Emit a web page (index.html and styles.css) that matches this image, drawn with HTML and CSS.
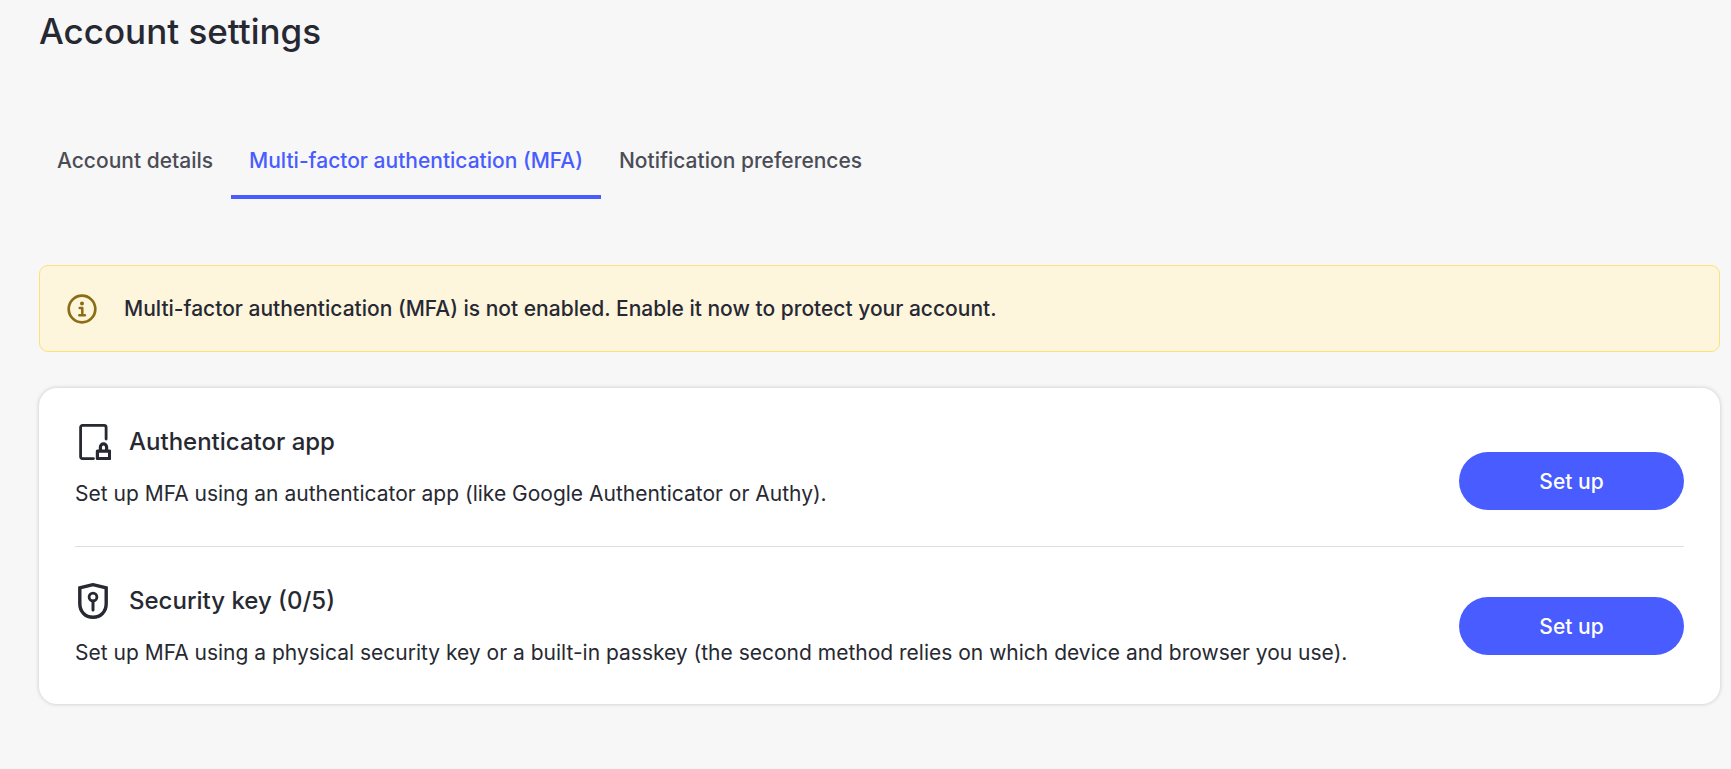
FILE: index.html
```
<!DOCTYPE html>
<html lang="en">
<head>
    <meta charset="UTF-8">
    <meta name="viewport" content="width=device-width, initial-scale=1.0">
    <title>Account settings</title>
    <link rel="stylesheet" href="styles.css">
</head>
<body>
    <main class="page">
        <h1>Account settings</h1>

        <nav class="tabs">
            <a href="#details">Account details</a>
            <a href="#mfa" class="active" aria-current="page">Multi-factor authentication (MFA)</a>
            <a href="#notifications">Notification preferences</a>
        </nav>

        <div class="alert" role="status">
            <svg class="alert-icon" viewBox="0 0 30 30" fill="none" stroke="currentColor" aria-hidden="true">
                <circle cx="15" cy="15" r="13.3" stroke-width="2.7"/>
                <circle cx="15" cy="9.6" r="2" fill="currentColor" stroke="none"/>
                <path d="M12.7 14h2.6v7M12.3 21.2h5.6" stroke-width="2.5" stroke-linecap="round" stroke-linejoin="round"/>
            </svg>
            <p>Multi-factor authentication (MFA) is not enabled. Enable it now to protect your account.</p>
        </div>

        <div class="card">
            <section class="method method-app">
                <div class="method-info">
                    <h2>
                        <svg class="method-icon" viewBox="0 0 36 36" fill="none" stroke="currentColor" aria-hidden="true">
                            <path d="M18.5 34.6H7.6a2 2 0 0 1-2-2V3.4a2 2 0 0 1 2-2h21.5a2 2 0 0 1 2 2V15" stroke-width="2.8" stroke-linecap="round" stroke-linejoin="round"/>
                            <path d="M22.4 27.2h12.2v7.4H22.4z" stroke-width="3.2" stroke-linejoin="round"/>
                            <path d="M25.4 27v-4a3.1 3.1 0 0 1 6.2 0v4" stroke-width="3.2"/>
                        </svg>
                        Authenticator app
                    </h2>
                    <p>Set up MFA using an authenticator app (like Google Authenticator or Authy).</p>
                </div>
                <button type="button">Set up</button>
            </section>

            <section class="method">
                <div class="method-info">
                    <h2>
                        <svg class="method-icon" viewBox="0 0 36 36" fill="none" stroke="currentColor" aria-hidden="true">
                            <path d="M18 1.7L4.8 4.9v15.6C4.8 28.8 10.4 34.3 18 34.3s13.2-5.5 13.2-13.8V4.9z" stroke-width="3.4"/>
                            <circle cx="18" cy="14" r="3.9" stroke-width="2.8"/>
                            <path d="M18 18v9" stroke-width="3" stroke-linecap="round"/>
                        </svg>
                        Security key (0/5)
                    </h2>
                    <p>Set up MFA using a physical security key or a built-in passkey (the second method relies on which device and browser you use).</p>
                </div>
                <button type="button">Set up</button>
            </section>
        </div>
    </main>
</body>
</html>
```
FILE: styles.css
```
* {
    box-sizing: border-box;
}

body {
    margin: 0;
    background: #f7f7f7;
    color: #272932;
    font-family: Inter, sans-serif;
    font-size: 21px;
    line-height: 32px;
}

h1, h2, p {
    margin: 0;
}

.page {
    padding: 8px 11px 40px 39px;
}

h1 {
    font-size: 35px;
    font-weight: 500;
    line-height: 46px;
}

.tabs {
    display: flex;
    margin-top: 72px;
}

.tabs a {
    padding: 19px 18px 18px;
    border-bottom: 4px solid transparent;
    color: #4b4d56;
    font-weight: 500;
    text-decoration: none;
}

.tabs .active {
    color: #485cff;
    border-bottom-color: #485cff;
}

.alert {
    display: flex;
    align-items: center;
    gap: 27px;
    margin-top: 66px;
    padding: 27px;
    background: #fef5dd;
    border: 1px solid #fae27a;
    border-radius: 9px;
}

.alert p {
    font-weight: 500;
    line-height: 31px;
}

.alert-icon {
    flex: none;
    width: 30px;
    height: 30px;
    color: #8a6d14;
}

.card {
    margin-top: 36px;
    padding: 0 36px;
    background: #fff;
    border-radius: 18px;
    box-shadow: 0 0 4px rgba(0, 0, 0, 0.2);
}

.method {
    display: flex;
    align-items: center;
    justify-content: space-between;
    gap: 36px;
    padding: 36px 0;
}

.method + .method {
    padding-bottom: 35px;
    border-top: 1px solid #e0e0e2;
}

.method-app {
    align-items: flex-end;
}

h2 {
    display: flex;
    align-items: center;
    gap: 18px;
    margin-bottom: 18px;
    font-size: 24px;
    font-weight: 500;
    line-height: 36px;
}

.method-icon {
    flex: none;
    width: 36px;
    height: 36px;
}

button {
    flex: none;
    width: 225px;
    height: 58px;
    border: none;
    border-radius: 29px;
    background: #485cff;
    color: #fff;
    font-family: inherit;
    font-size: 21px;
    font-weight: 500;
    cursor: pointer;
}
```
